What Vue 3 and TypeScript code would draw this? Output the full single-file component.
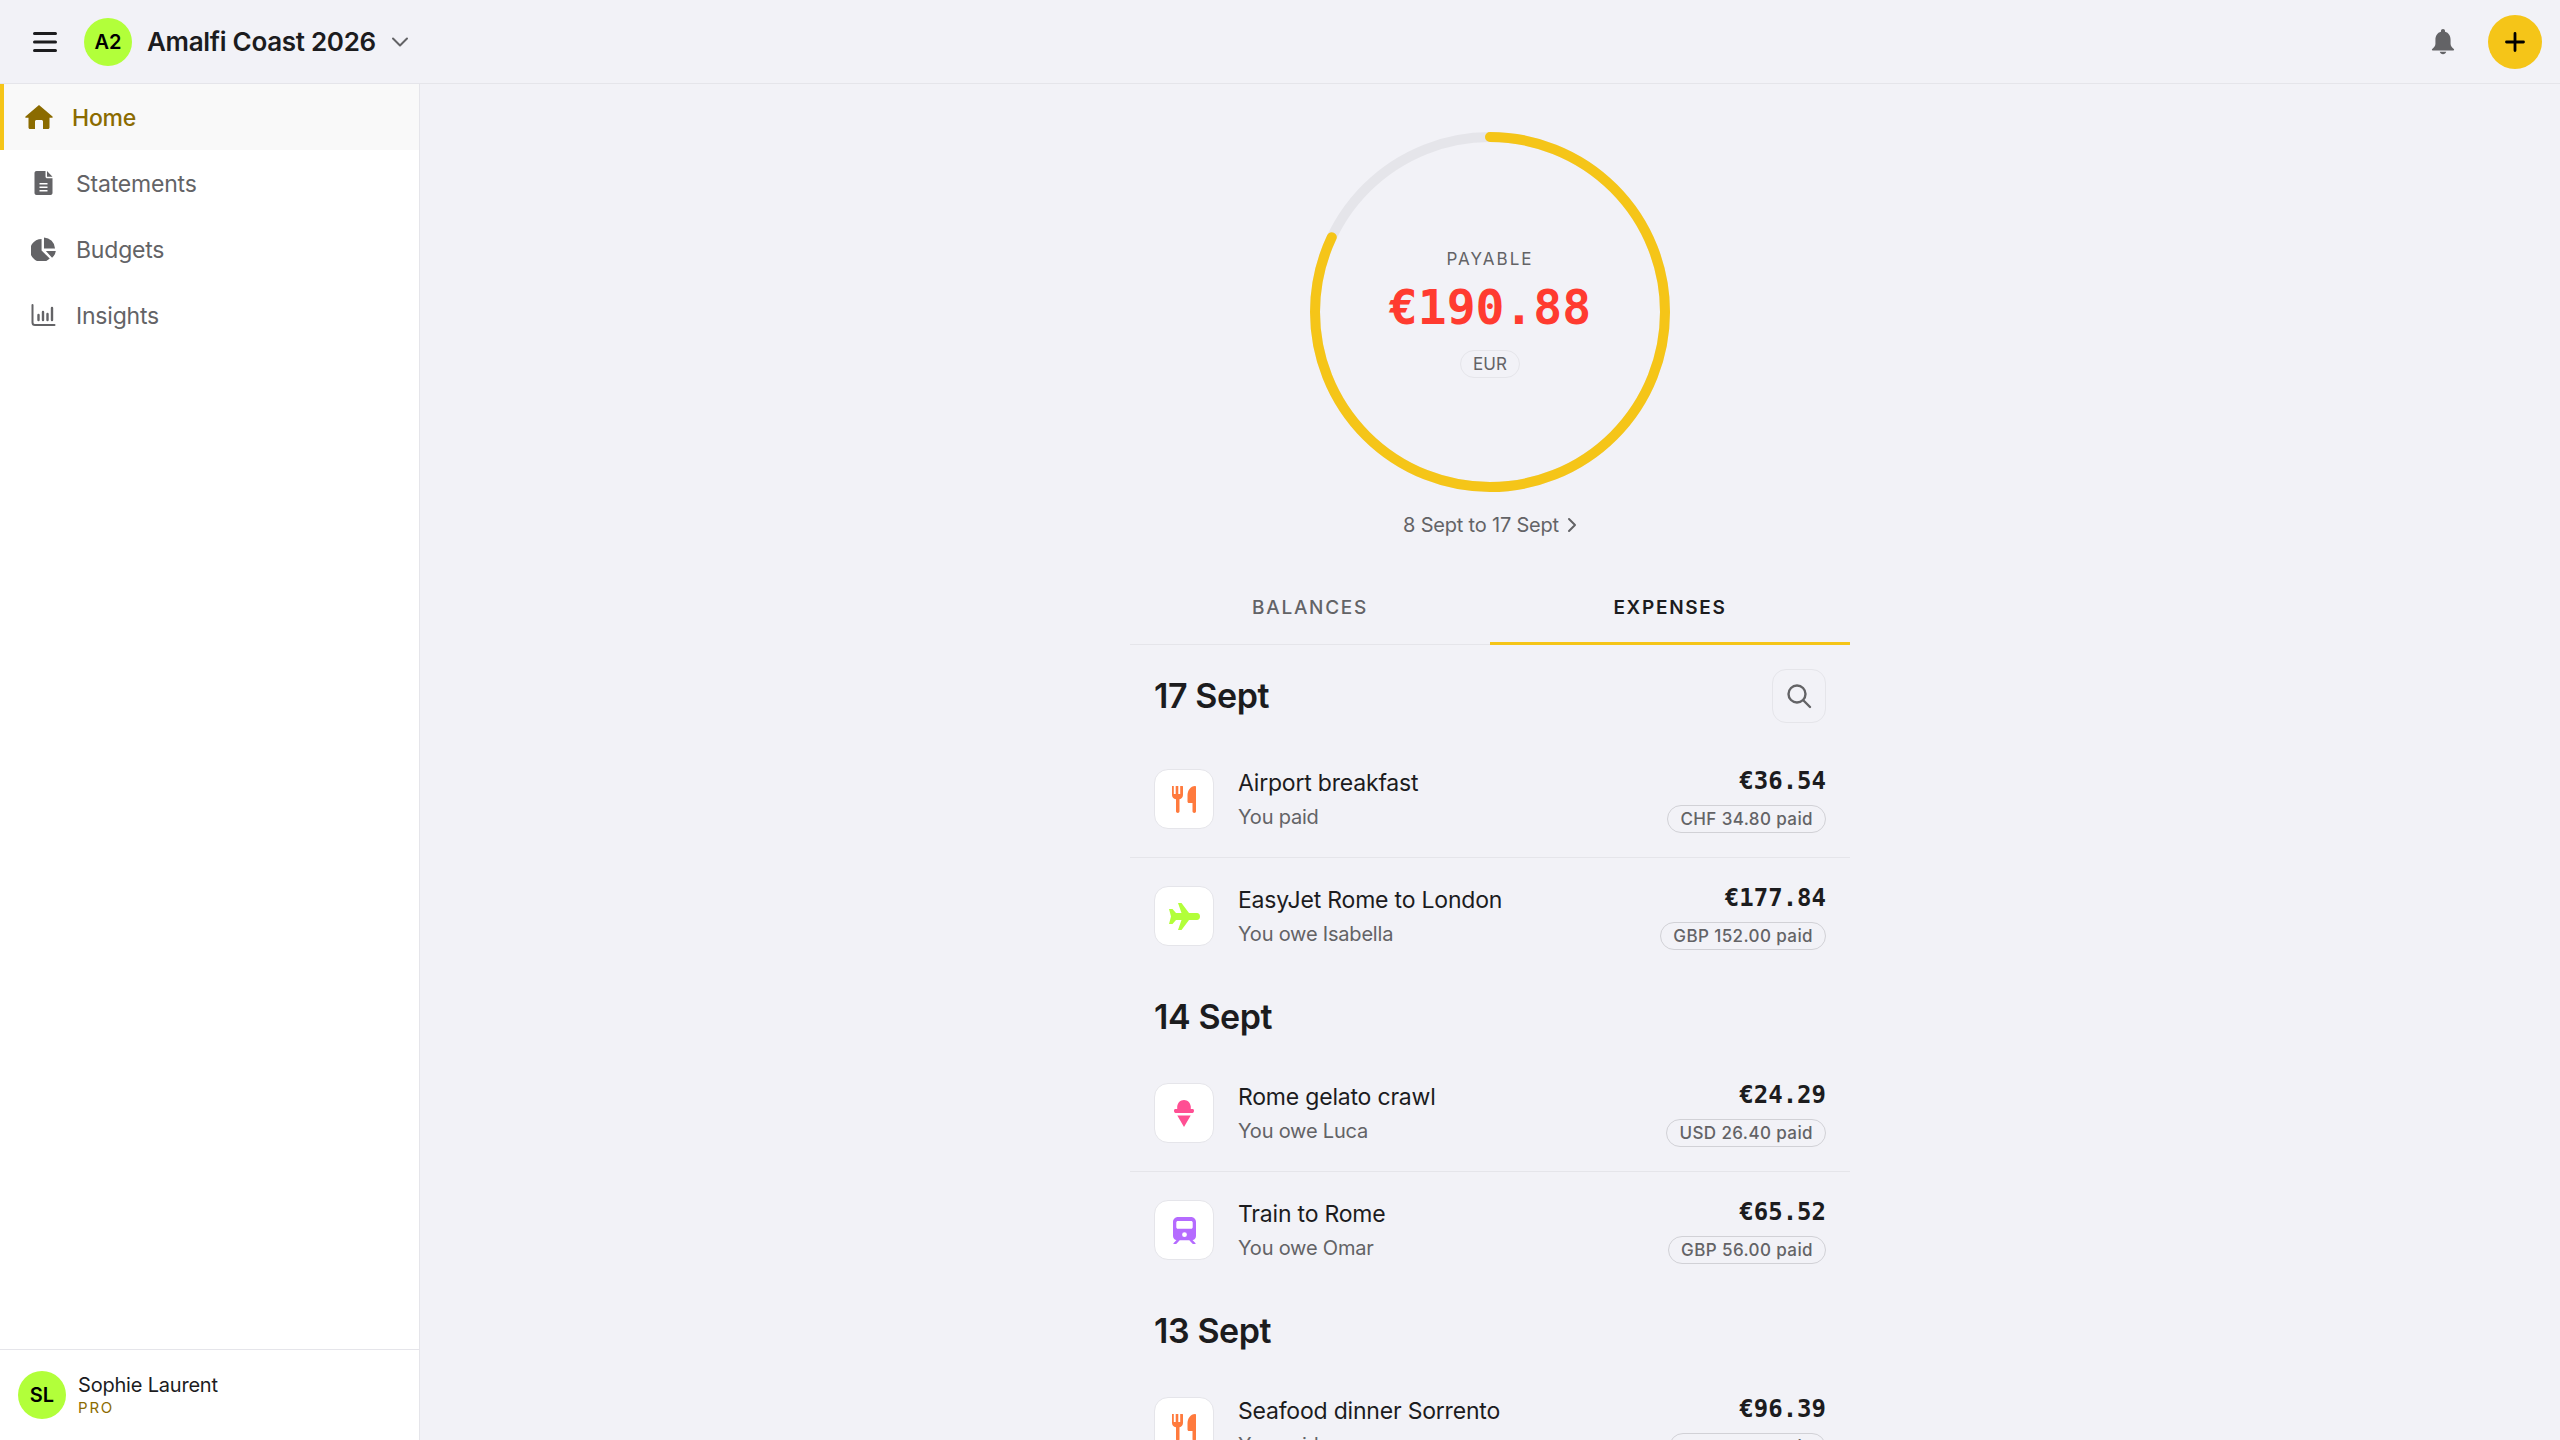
<template>
  <div class="app">
    <header class="topbar">
      <div class="topbar-left">
        <button class="menu-btn" aria-label="Menu">
          <svg width="24" height="20" viewBox="0 0 24 20"><path d="M1.500 1.500h21M1.500 10h21M1.500 18.500h21" stroke="#1c1c1e" stroke-width="3" stroke-linecap="round" fill="none" /></svg>
        </button>
        <div class="avatar">A2</div>
        <span class="trip-name">Amalfi Coast 2026</span>
        <svg class="chev" width="18" height="12" viewBox="0 0 18 12"><path d="M2 2.500l7 7 7-7" stroke="#636366" stroke-width="2" fill="none" stroke-linecap="round" stroke-linejoin="round" /></svg>
      </div>
      <div class="topbar-right">
        <svg class="bell" width="24" height="27" viewBox="0 0 26 28"><path fill="#636366" d="M13 0.500c-1.300 0-2.200 1-2.200 2.200v.8C6.800 4.500 4.800 8 4.800 12v4.500c0 2.400-1.300 4-3.500 5.700-.6.500-.4 1.600.6 1.600h22.200c1 0 1.200-1.100.6-1.600-2.200-1.700-3.500-3.300-3.500-5.700V12c0-4-2-7.500-6-8.500v-.8c0-1.200-.9-2.200-2.200-2.200zM9.500 25.200c.4 1.500 1.800 2.600 3.500 2.600s3.100-1.100 3.500-2.600z" /></svg>
        <button class="add-btn" aria-label="Add">
          <svg width="22" height="22" viewBox="0 0 22 22"><path d="M11 2.500v17M2.500 11h17" stroke="#000" stroke-width="2.800" stroke-linecap="round" /></svg>
        </button>
      </div>
    </header>

    <div class="body">
      <aside class="sidebar">
        <nav class="nav">
          <a class="nav-item active">
            <svg width="28" height="24" viewBox="0 0 28 24"><path fill="#8b6b00" d="M14 0l13.500 11.500c.5.500.2 1.300-.5 1.300h-2.500v9.700c0 .8-.7 1.500-1.500 1.500h-5V16.500c0-.8-.7-1.500-1.500-1.500h-5c-.8 0-1.500.7-1.500 1.500V24h-5c-.8 0-1.500-.7-1.500-1.500v-9.700H1c-.7 0-1-.8-.5-1.300z" /></svg>
            <span>Home</span>
          </a>
          <a class="nav-item">
            <svg width="18" height="24" viewBox="0 0 18 24"><path fill="#636366" d="M2 0h9v5.500c0 1 .8 1.800 1.800 1.800H18V22c0 1.100-.9 2-2 2H2c-1.100 0-2-.9-2-2V2C0 .9.900 0 2 0zm10.500 0L18 5.800h-5.500zM5 12v1.600h8V12zm0 3.500v1.600h8v-1.600zm0 3.500v1.600h8V19z" fill-rule="evenodd" /></svg>
            <span>Statements</span>
          </a>
          <a class="nav-item">
            <svg width="26" height="24" viewBox="0 0 26 24"><path fill="#636366" d="M11 1.500v12l8.500 8.500A12 12 0 1 1 11 1.500zM13.500 0A12 12 0 0 1 25 11.500H13.500zM15.500 14H25.800a12 12 0 0 1-3.900 7.200z" /></svg>
            <span>Budgets</span>
          </a>
          <a class="nav-item">
            <svg width="24" height="22" viewBox="0 0 24 22"><path d="M1 1v17.500c0 1.400 1.100 2.500 2.500 2.500H23" stroke="#636366" stroke-width="2" fill="none" stroke-linecap="round" /><path d="M7 11v5M11.500 8v8M16 10v6M20.500 4v12" stroke="#636366" stroke-width="2.400" stroke-linecap="round" /></svg>
            <span>Insights</span>
          </a>
        </nav>
        <div class="profile">
          <div class="avatar">SL</div>
          <div class="profile-text">
            <div class="profile-name">Sophie Laurent</div>
            <div class="profile-plan">PRO</div>
          </div>
        </div>
      </aside>

      <main class="main">
        <section class="summary">
          <div class="ring">
            <svg width="360" height="360" viewBox="0 0 360 360">
              <circle cx="180" cy="180" r="175" fill="none" stroke="#e5e5ea" stroke-width="10" />
              <circle
                cx="180"
                cy="180"
                r="175"
                fill="none"
                stroke="#f5c518"
                stroke-width="10"
                stroke-linecap="round"
                :stroke-dasharray="`${ringLength * 0.82} ${ringLength}`"
                transform="rotate(-90 180 180)"
              />
            </svg>
            <div class="ring-content">
              <div class="ring-label">PAYABLE</div>
              <div class="ring-amount">€190.88</div>
              <div class="ring-currency">EUR</div>
            </div>
          </div>
          <div class="period">
            <span>8 Sept to 17 Sept</span>
            <svg width="10" height="16" viewBox="0 0 10 16"><path d="M2 2l6 6-6 6" stroke="#636366" stroke-width="2" fill="none" stroke-linecap="round" stroke-linejoin="round" /></svg>
          </div>
        </section>

        <div class="content">
          <div class="tabs">
            <div class="tab">BALANCES</div>
            <div class="tab active">EXPENSES</div>
          </div>

          <section v-for="(group, i) in groups" :key="group.date" class="group">
            <div class="group-head" :class="{ first: i === 0 }">
              <h2>{{ group.date }}</h2>
              <button v-if="i === 0" class="search-btn" aria-label="Search">
                <svg width="26" height="26" viewBox="0 0 26 26"><circle cx="11" cy="11" r="8.500" stroke="#636366" stroke-width="2.400" fill="none" /><path d="M17.500 17.500l6.500 6.500" stroke="#636366" stroke-width="2.400" stroke-linecap="round" /></svg>
              </button>
            </div>
            <div v-for="item in group.items" :key="item.title" class="row">
              <div class="row-icon">
                <svg v-if="item.icon === 'food'" width="24" height="27" viewBox="0 0 24 27"><path fill="#ff7a3d" d="M0 0h1.800v8h1.900V0h2.600v8h1.900V0H10.500c.3 0 .5.200.5.500v8.500c0 2.200-1.400 3.800-3.500 4.300v12c0 .9-.8 1.700-1.700 1.700s-1.800-.8-1.800-1.700v-12C1.400 12.800 0 11.200 0 9zM23 0c.6 0 1 .4 1 1v24.300c0 .9-.8 1.700-1.700 1.700s-1.800-.8-1.800-1.700V17H17c-1 0-1.500-.6-1.500-1.500V9.500C15.500 4.500 18.500 0 23 0z" /></svg>
                <svg v-else-if="item.icon === 'plane'" width="31" height="27" viewBox="0 0 31 27"><path fill="#b2ff3a" d="M9 0h3.500L20 10h8c1.800 0 3 1.500 3 3.500s-1.200 3.500-3 3.500h-8l-7.500 10H9l3.500-10H7l-3.500 4H0l2-7.500L0 6h3.500L7 10h5.500z" /></svg>
                <svg v-else-if="item.icon === 'gelato'" width="20" height="27" viewBox="0 0 20 27"><path fill="#ff4f93" d="M10 0c3.600 0 6.400 2.800 6.800 6.500V9h1.700c.9 0 1.500.6 1.500 1.800s-.6 2.200-1.500 2.200H1.500C.6 13 0 12 0 10.800S.6 9 1.500 9h1.700V6.500C3.600 2.800 6.400 0 10 0zM3.300 15.500h13.400L10 27z" /></svg>
                <svg v-else width="23" height="27" viewBox="0 0 23 27"><path fill="#b56bff" fill-rule="evenodd" d="M5 0h13c2.800 0 5 2.200 5 5v14c0 2.200-1.500 3.800-3.500 4.100l3 3.200c.3.300.1.700-.3.700h-2.400l-3.500-3.800H6.700L3.200 27H.8c-.4 0-.6-.4-.3-.7l3-3.200C1.500 22.800 0 21.200 0 19V5c0-2.800 2.200-5 5-5zM4.800 4c-.8 0-1.500.7-1.500 1.500v4.700c0 .8.700 1.500 1.500 1.500h13.400c.8 0 1.500-.7 1.500-1.500V5.500c0-.8-.7-1.500-1.500-1.500zM11.500 15.300a2.400 2.400 0 1 0 0 4.800 2.400 2.400 0 0 0 0-4.800z" /></svg>
              </div>
              <div class="row-text">
                <div class="row-title">{{ item.title }}</div>
                <div class="row-sub">{{ item.sub }}</div>
              </div>
              <div class="row-right">
                <div class="row-amount">{{ item.amount }}</div>
                <div class="row-paid">{{ item.paid }}</div>
              </div>
            </div>
          </section>
        </div>
      </main>
    </div>
  </div>
</template>

<script setup lang="ts">
interface Expense {
  icon: 'food' | 'plane' | 'gelato' | 'train';
  title: string;
  sub: string;
  amount: string;
  paid: string;
}

interface ExpenseGroup {
  date: string;
  items: Expense[];
}

const ringLength = 2 * Math.PI * 175;

const groups: ExpenseGroup[] = [
  {
    date: '17 Sept',
    items: [
      { icon: 'food', title: 'Airport breakfast', sub: 'You paid', amount: '€36.54', paid: 'CHF 34.80 paid' },
      { icon: 'plane', title: 'EasyJet Rome to London', sub: 'You owe Isabella', amount: '€177.84', paid: 'GBP 152.00 paid' }
    ]
  },
  {
    date: '14 Sept',
    items: [
      { icon: 'gelato', title: 'Rome gelato crawl', sub: 'You owe Luca', amount: '€24.29', paid: 'USD 26.40 paid' },
      { icon: 'train', title: 'Train to Rome', sub: 'You owe Omar', amount: '€65.52', paid: 'GBP 56.00 paid' }
    ]
  },
  {
    date: '13 Sept',
    items: [
      { icon: 'food', title: 'Seafood dinner Sorrento', sub: 'You paid', amount: '€96.39', paid: 'EUR 96.39 paid' }
    ]
  }
];
</script>

<style>
html,
body {
  margin: 0;
  height: 100%;
  overflow: hidden;
  background: #f2f2f7;
}
</style>

<style scoped>
.app {
  height: 1440px;
  display: flex;
  flex-direction: column;
  background: #f2f2f7;
  color: #1c1c1e;
  font-family: Inter, "Liberation Sans", sans-serif;
  overflow: hidden;
}

.topbar {
  flex: none;
  height: 83px;
  border-bottom: 1px solid #e5e5ea;
  display: flex;
  align-items: center;
  justify-content: space-between;
  padding: 0 18px 0 33px;
}

.topbar-left,
.topbar-right {
  display: flex;
  align-items: center;
}

.menu-btn,
.add-btn,
.search-btn {
  border: none;
  padding: 0;
  display: flex;
  align-items: center;
  justify-content: center;
}

.menu-btn {
  background: none;
  margin-right: 27px;
}

.avatar {
  width: 48px;
  height: 48px;
  border-radius: 50%;
  background: #b2ff3a;
  color: #000;
  display: flex;
  align-items: center;
  justify-content: center;
  font-size: 20px;
  font-weight: 600;
  flex: none;
}

.trip-name {
  margin-left: 15px;
  font-size: 26px;
  font-weight: 600;
  letter-spacing: -0.3px;
}

.chev {
  margin-left: 15px;
}

.bell {
  margin-right: 33px;
}

.add-btn {
  width: 54px;
  height: 54px;
  border-radius: 50%;
  background: #f5c518;
}

.body {
  flex: 1;
  display: flex;
  min-height: 0;
}

.sidebar {
  width: 419px;
  flex: none;
  background: #fff;
  border-right: 1px solid #e5e5ea;
  display: flex;
  flex-direction: column;
  justify-content: space-between;
}

.nav-item {
  height: 66px;
  display: flex;
  align-items: center;
  gap: 20px;
  padding-left: 31px;
  font-size: 23px;
  letter-spacing: -0.2px;
  color: #636366;
}

.nav-item span {
  padding-top: 2px;
}

.nav-item svg {
  width: 25px;
}

.nav-item.active {
  background: #f9f9f9;
  border-left: 4px solid #f5c518;
  padding-left: 21px;
  color: #8b6b00;
  font-weight: 500;
  gap: 19px;
}

.nav-item.active svg {
  width: 28px;
}

.profile {
  height: 90px;
  border-top: 1px solid #e5e5ea;
  display: flex;
  align-items: center;
  gap: 12px;
  padding-left: 18px;
}

.profile-name {
  font-size: 20px;
  line-height: 26px;
  letter-spacing: -0.2px;
}

.profile-plan {
  font-size: 15px;
  line-height: 20px;
  letter-spacing: 1.800px;
  color: #8b6b00;
}

.main {
  flex: 1;
  min-width: 0;
  display: flex;
  flex-direction: column;
  align-items: center;
  padding-top: 48px;
}

.summary {
  display: flex;
  flex-direction: column;
  align-items: center;
}

.ring {
  position: relative;
  width: 360px;
  height: 360px;
}

.ring svg {
  display: block;
}

.ring-content {
  position: absolute;
  inset: 0;
  display: flex;
  flex-direction: column;
  align-items: center;
  justify-content: center;
  padding-top: 3px;
  box-sizing: border-box;
}

.ring-label {
  font-size: 17px;
  letter-spacing: 2px;
  color: #636366;
}

.ring-amount {
  margin-top: 8px;
  font-family: "DejaVu Sans Mono", "Liberation Mono", monospace;
  font-size: 48px;
  line-height: 60px;
  font-weight: 700;
  color: #ff3b30;
}

.ring-currency {
  margin-top: 13px;
  padding: 0 12px;
  height: 26px;
  line-height: 26px;
  border: 1px solid #e5e5ea;
  border-radius: 14px;
  font-size: 17px;
  color: #636366;
}

.period {
  margin-top: 20px;
  display: flex;
  align-items: center;
  gap: 8px;
  font-size: 20px;
  line-height: 26px;
  letter-spacing: -0.2px;
  color: #636366;
}

.content {
  width: 720px;
  margin-top: 33px;
}

.tabs {
  display: flex;
  height: 74px;
  border-bottom: 1px solid #e5e5ea;
  box-sizing: border-box;
}

.tab {
  flex: 1;
  display: flex;
  align-items: center;
  justify-content: center;
  font-size: 19px;
  font-weight: 500;
  letter-spacing: 1.700px;
  color: #636366;
}

.tab.active {
  color: #1c1c1e;
  font-weight: 600;
  border-bottom: 3px solid #f5c518;
  margin-bottom: -1px;
  padding-top: 2px;
}

.group-head {
  margin: 24px 24px 19px;
  min-height: 38px;
  display: flex;
  align-items: center;
  justify-content: space-between;
}

.group-head.first {
  min-height: 54px;
  margin-bottom: 18px;
}

.group-head h2 {
  margin: 0;
  font-size: 34px;
  line-height: 38px;
  font-weight: 600;
  letter-spacing: -0.4px;
}

.search-btn {
  width: 54px;
  height: 54px;
  box-sizing: border-box;
  border: 1px solid #e5e5ea;
  border-radius: 14px;
  background: none;
}

.row {
  display: flex;
  align-items: center;
  gap: 24px;
  padding: 26px 24px 24px;
  border-bottom: 1px solid #e5e5ea;
}

.group .row:last-child {
  border-bottom: none;
}

.row-icon {
  width: 60px;
  height: 60px;
  flex: none;
  box-sizing: border-box;
  background: #fff;
  border: 1px solid #e5e5ea;
  border-radius: 14px;
  margin-bottom: 2px;
  display: flex;
  align-items: center;
  justify-content: center;
}

.row-text {
  flex: 1;
  min-width: 0;
  margin-bottom: 2px;
}

.row-title {
  font-size: 23px;
  line-height: 30px;
  letter-spacing: -0.2px;
}

.row-sub {
  margin-top: 6px;
  font-size: 20px;
  line-height: 26px;
  letter-spacing: -0.2px;
  color: #636366;
}

.row-right {
  display: flex;
  flex-direction: column;
  align-items: flex-end;
  gap: 10px;
}

.row-amount {
  font-family: "DejaVu Sans Mono", "Liberation Mono", monospace;
  font-size: 24px;
  line-height: 28px;
  font-weight: 700;
}

.row-paid {
  height: 26px;
  line-height: 26px;
  padding: 0 12px;
  border: 1px solid #d1d1d6;
  border-radius: 14px;
  font-size: 17px;
  font-weight: 500;
  letter-spacing: 0.400px;
  color: #636366;
}
</style>
